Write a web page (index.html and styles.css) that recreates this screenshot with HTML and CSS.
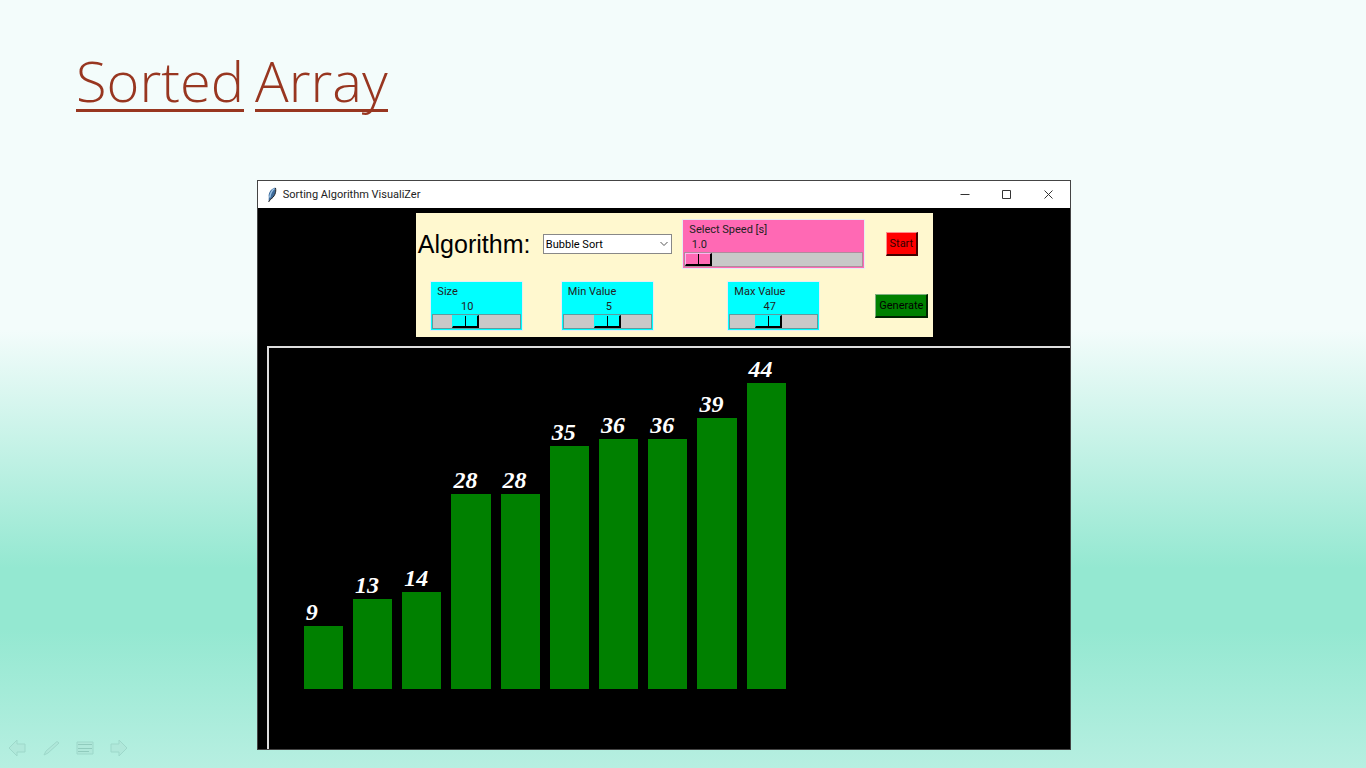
FILE: index.html
```html
<!DOCTYPE html>
<html lang="en">
<head>
<meta charset="utf-8">
<title>Sorted Array</title>
<link rel="stylesheet" href="styles.css">
</head>
<body>
<main class="slide">
  <h1 class="slide-title"><span class="word">Sorted</span> <span class="word">Array</span></h1>

  <section class="window" aria-label="Sorting Algorithm VisualiZer">
    <header class="titlebar">
      <svg class="feather" viewBox="0 0 10 16" aria-hidden="true">
        <path d="M1.600 14.500 1.800 10C1.200 7 3 2 8.200.5 9.500 3.500 8.500 9.500 3.500 12.500Z" fill="#3d6a9a"/>
        <path d="M7.500 1.500C4 4 3.200 7 2.800 10.500" stroke="#9cc3e6" stroke-width="1.500" fill="none"/>
        <path d="M8.500 1C9.500 5 7.500 10 3.500 12.300L1.600 15" stroke="#222" fill="none"/>
      </svg>
      <span class="caption">Sorting Algorithm VisualiZer</span>
      <button class="win-btn" aria-label="Minimize"><svg viewBox="0 0 10 10"><path d="M.5 4.500h9"/></svg></button>
      <button class="win-btn" aria-label="Maximize"><svg viewBox="0 0 10 10"><path d="M.5.5h8v8h-8z"/></svg></button>
      <button class="win-btn" aria-label="Close"><svg viewBox="0 0 10 10"><path d="M.5.5l8 8M8.500.5l-8 8"/></svg></button>
    </header>

    <div class="client">
      <div class="toolbar">
        <form class="panel">
          <label class="algo-label" for="algo">Algorithm:</label>
          <div class="combo">
            <select id="algo"><option>Bubble Sort</option><option>Quick Sort</option><option>Merge Sort</option></select>
            <svg class="chevron" viewBox="0 0 8 6" aria-hidden="true"><path d="M.5 1 4 4.500 7.500 1"/></svg>
          </div>
          <div class="scale speed">
            <label for="speed">Select Speed [s]</label>
            <output for="speed" style="--pos:0">1.0</output>
            <input type="range" id="speed" min="1" max="5" step="0.2" value="1">
          </div>
          <button type="button" class="tk-btn start">Start</button>

          <div class="scale">
            <label for="size">Size</label>
            <output for="size" style="--pos:.32">10</output>
            <input type="range" id="size" min="3" max="25" value="10">
          </div>
          <div class="scale">
            <label for="min">Min Value</label>
            <output for="min" style="--pos:.5">5</output>
            <input type="range" id="min" min="0" max="10" value="5">
          </div>
          <div class="scale">
            <label for="max">Max Value</label>
            <output for="max" style="--pos:.41">47</output>
            <input type="range" id="max" min="10" max="100" value="47">
          </div>
          <button type="button" class="tk-btn generate">Generate</button>
        </form>
      </div>

      <div class="canvas">
        <div class="chart">
          <div class="col"><span>9</span><div class="bar" style="--v:9"></div></div>
          <div class="col"><span>13</span><div class="bar" style="--v:13"></div></div>
          <div class="col"><span>14</span><div class="bar" style="--v:14"></div></div>
          <div class="col"><span>28</span><div class="bar" style="--v:28"></div></div>
          <div class="col"><span>28</span><div class="bar" style="--v:28"></div></div>
          <div class="col"><span>35</span><div class="bar" style="--v:35"></div></div>
          <div class="col"><span>36</span><div class="bar" style="--v:36"></div></div>
          <div class="col"><span>36</span><div class="bar" style="--v:36"></div></div>
          <div class="col"><span>39</span><div class="bar" style="--v:39"></div></div>
          <div class="col"><span>44</span><div class="bar" style="--v:44"></div></div>
        </div>
      </div>
    </div>
  </section>

  <nav class="show-nav" aria-label="Slide show">
    <button aria-label="Previous"><svg viewBox="0 0 18 18"><path d="M1 9 9 1v4h8v8H9v4z"/></svg></button>
    <button aria-label="Pen"><svg viewBox="0 0 18 18"><path d="M2 16 4 12 15 2.500 17 4 6 14z"/></svg></button>
    <button aria-label="Menu"><svg viewBox="0 0 18 18"><path d="M1 3h16v12H1z"/><path class="lines" d="M2 5.500h14M2 9.500h14M2 12.500h11"/></svg></button>
    <button aria-label="Next"><svg viewBox="0 0 18 18"><path d="M17 9 9 1v4H1v8h8v4z"/></svg></button>
  </nav>
</main>
</body>
</html>
```
FILE: styles.css
```css
* { box-sizing: border-box; }

body {
  margin: 0;
  font-family: Roboto, "Open Sans", sans-serif;
  font-size: 11px;
  color: #000;
}

button {
  font: inherit;
  color: inherit;
  background: none;
  border: 0;
  padding: 0;
}

.slide {
  position: relative;
  min-height: 100vh;
  padding-bottom: 18px;
  background: linear-gradient(#f3fcfb 0%, #f3fcfb 43%, #94e8d1 74%, #94e8d1 82%, #b7efe1 100%);
}

.slide-title {
  display: flex;
  align-items: flex-start;
  gap: 11px;
  height: 180px;
  margin: 0;
  padding: 52px 76px 0;
  font: 300 56px/57px "Open Sans", "Noto Sans", sans-serif;
  color: #983620;
}

.word { border-bottom: 3px solid #983620; }

.window {
  width: 59.600%;
  margin-left: 18.800%;
  border: 1px solid #444;
  background: #000;
}

.titlebar {
  display: flex;
  align-items: center;
  height: 27px;
  padding-left: 9px;
  background: #fff;
}

.feather { width: 10px; height: 16px; }

.caption { flex: 1; padding-left: 6px; color: #222; }

.win-btn {
  display: grid;
  place-items: center;
  width: 42px;
  height: 27px;
}

.win-btn svg {
  width: 10px;
  height: 10px;
  fill: none;
  stroke: #333;
}

.client {
  padding: 5px 0 0 9px;
  overflow: hidden;
}

.toolbar { padding: 0 0 9px 12px; }

.panel {
  display: grid;
  grid-template-columns: 122px 139px 194px 62px;
  grid-template-rows: 62px 62px;
  place-items: center;
  width: 517px;
  margin: 0 auto;
  background: #fff8cf;
}

.algo-label {
  justify-self: start;
  padding-left: 2px;
  font: 25px "Liberation Sans", Arial, sans-serif;
  white-space: nowrap;
}

.combo {
  display: grid;
  align-items: center;
  width: 129px;
}

.combo > * { grid-area: 1 / 1; }

.combo select {
  appearance: none;
  width: 100%;
  height: 20px;
  padding: 0 2px;
  border: 1px solid #888;
  border-radius: 0;
  background: #fff;
  font: inherit;
  color: #000;
}

.chevron {
  justify-self: end;
  width: 8px;
  height: 6px;
  margin-right: 4px;
  fill: none;
  stroke: #555;
  pointer-events: none;
}

.scale {
  --face: #00ffff;
  --light: #00ffff;
  --trough-edge: #5f9a9e;
  display: flex;
  flex-direction: column;
  width: 93px;
  height: 50px;
  padding: 2px 1px 0;
  border: 1px solid #e6ecf4;
  background: var(--face);
  line-height: 15px;
  color: #222;
}

.scale.speed {
  --face: #ff69b4;
  --light: #ffb4f0;
  --trough-edge: #b08a9c;
  width: 183px;
}

.scale label { padding-left: 5px; }

.scale output {
  width: 27px;
  margin-left: calc((100% - 27px) * var(--pos));
  padding-left: 3px;
  text-align: center;
}

.scale input {
  appearance: none;
  width: 100%;
  height: 15px;
  margin: 0;
  border: 1px solid var(--trough-edge);
  background: #c8c8c8;
}

.scale input::-webkit-slider-thumb {
  appearance: none;
  width: 27px;
  height: 13px;
  border: solid #000;
  border-width: 1px 2px 2px 1px;
  border-top-color: var(--light);
  border-left-color: var(--light);
  background: linear-gradient(90deg, transparent 12px, #000 12px, #000 13px, transparent 13px) var(--face);
}

.tk-btn {
  height: 24px;
  border: solid;
  border-width: 1px 2px 2px 1px;
  white-space: nowrap;
}

.start {
  width: 32px;
  background: #ff0000;
  border-color: #ff8c8c #400 #400 #ff8c8c;
  color: #300;
}

.generate {
  width: 53px;
  background: #008000;
  border-color: #80b080 #020 #020 #80b080;
}

.canvas {
  border: solid #ddd;
  border-width: 2px 0 0 2px;
  padding: 0 0 60px 35px;
}

.chart {
  display: grid;
  grid-template-columns: repeat(10, 1fr);
  gap: 10px;
  align-items: end;
  width: 482px;
  height: 341px;
}

.col span {
  display: block;
  padding-left: 2px;
  font: italic bold 24px/28px "Liberation Serif", "Times New Roman", serif;
  color: #fff;
}

.bar {
  height: calc(306px * var(--v) / 44);
  background: #008000;
}

.show-nav {
  position: absolute;
  left: 8px;
  bottom: 11px;
  display: flex;
  gap: 16px;
}

.show-nav button { height: 18px; }

.show-nav svg {
  width: 18px;
  height: 18px;
  fill: #b0e8da;
  stroke: #9dd8ca;
}

.show-nav .lines { stroke: #90cbbd; }
```
